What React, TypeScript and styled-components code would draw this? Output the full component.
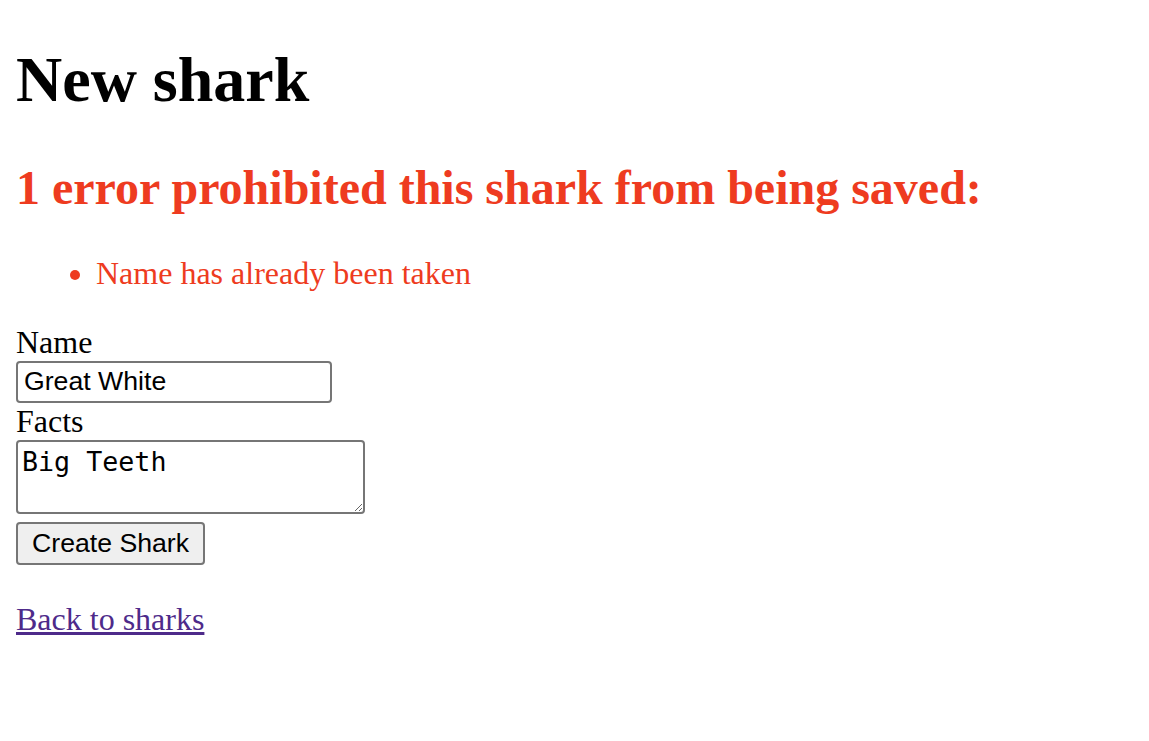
import React from "react";
import styled, { createGlobalStyle } from "styled-components";

const GlobalStyle = createGlobalStyle`
  html, body {
    background: #ffffff;
  }
  body {
    margin: 0 16px 16px 16px;
    font-family: "Liberation Serif", "Times New Roman", serif;
    font-size: 32px;
    color: #000000;
  }
`;

const Page = styled.main`
  display: block;
`;

const Title = styled.h1`
  font-size: 64px;
  font-weight: bold;
  margin: 42.88px 0;
`;

const ErrorBox = styled.div`
  color: #ee3b20;
`;

const ErrorTitle = styled.h2`
  font-size: 48px;
  font-weight: bold;
  margin: 39.84px 0;
`;

const ErrorList = styled.ul`
  margin: 32px 0;
  padding-left: 80px;
  list-style: disc;
`;

const Form = styled.form`
  display: block;
  margin: 0;
`;

const Field = styled.div`
  display: block;
`;

const Label = styled.label`
  display: block;
  font-size: 32px;
`;

const TextInput = styled.input`
  display: block;
  box-sizing: border-box;
  width: 316px;
  height: 42.67px;
  margin: 0;
  padding: 4px 6px;
  border: 2px solid #767676;
  border-radius: 4px;
  font-family: "Liberation Sans", Arial, sans-serif;
  font-size: 26.67px;
  color: #000000;
  background: #ffffff;
  outline: none;
`;

const TextArea = styled.textarea`
  display: block;
  box-sizing: border-box;
  width: 349px;
  height: 74px;
  margin: 0 0 8px 0;
  padding: 4px;
  border: 2px solid #767676;
  border-radius: 4px;
  font-family: "DejaVu Sans Mono", monospace;
  font-size: 26.67px;
  color: #000000;
  background: #ffffff;
  outline: none;
  resize: both;
`;

const Actions = styled.div`
  display: block;
`;

const SubmitButton = styled.button`
  display: block;
  box-sizing: border-box;
  height: 42.67px;
  margin: 0;
  padding: 2px 14px;
  border: 2px solid #767676;
  border-radius: 4px;
  background: #efefef;
  font-family: "Liberation Sans", Arial, sans-serif;
  font-size: 26.67px;
  color: #000000;
  cursor: pointer;
`;

const BackLink = styled.a`
  display: inline-block;
  margin-top: 36.6px;
  color: #4e2a8a;
  text-decoration: underline;
  font-size: 32px;
`;

export default function App() {
  return (
    <>
      <GlobalStyle />
      <Page>
        <Title>New shark</Title>
        <Form onSubmit={(e) => e.preventDefault()}>
          <ErrorBox>
            <ErrorTitle>1 error prohibited this shark from being saved:</ErrorTitle>
            <ErrorList>
              <li>Name has already been taken</li>
            </ErrorList>
          </ErrorBox>
          <Field>
            <Label htmlFor="shark_name">Name</Label>
            <TextInput id="shark_name" type="text" defaultValue="Great White" />
          </Field>
          <Field>
            <Label htmlFor="shark_facts">Facts</Label>
            <TextArea id="shark_facts" defaultValue="Big Teeth" />
          </Field>
          <Actions>
            <SubmitButton type="submit">Create Shark</SubmitButton>
          </Actions>
        </Form>
        <BackLink href="#">Back to sharks</BackLink>
      </Page>
    </>
  );
}
